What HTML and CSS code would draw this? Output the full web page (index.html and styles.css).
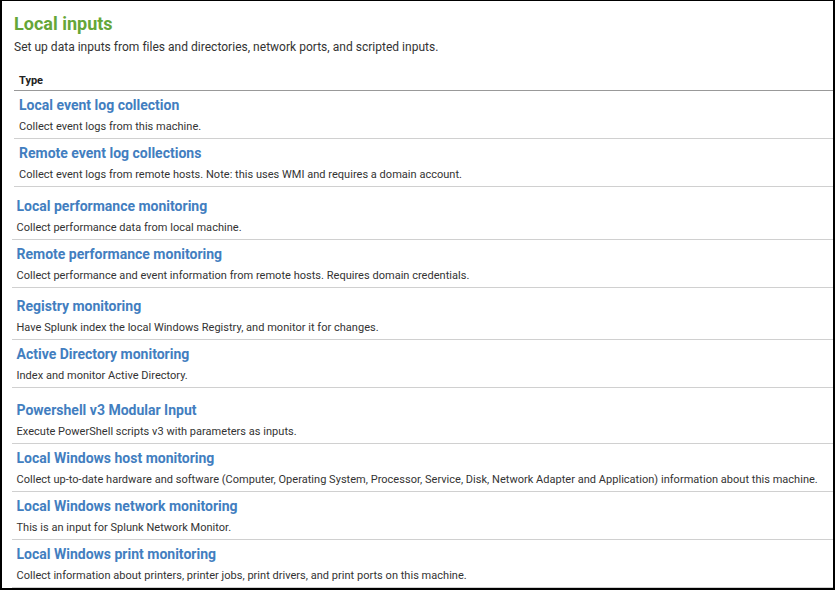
FILE: index.html
```html
<!DOCTYPE html>
<html lang="en">
<head>
    <meta charset="UTF-8">
    <title>Local inputs</title>
    <link rel="stylesheet" href="styles.css">
</head>
<body>
    <div class="frame">
        <div class="page-head">
            <h1>Local inputs</h1>
            <p class="subtitle">Set up data inputs from files and directories, network ports, and scripted inputs.</p>
        </div>

        <div class="inputs">
            <div class="inputs-head">Type</div>

            <div class="input-row">
                <a class="input-name">Local event log collection</a>
                <p class="input-desc">Collect event logs from this machine.</p>
            </div>
            <div class="input-row">
                <a class="input-name">Remote event log collections</a>
                <p class="input-desc">Collect event logs from remote hosts. Note: this uses WMI and requires a domain account.</p>
            </div>
            <div class="input-row shifted extra-5">
                <a class="input-name">Local performance monitoring</a>
                <p class="input-desc">Collect performance data from local machine.</p>
            </div>
            <div class="input-row shifted">
                <a class="input-name">Remote performance monitoring</a>
                <p class="input-desc">Collect performance and event information from remote hosts. Requires domain credentials.</p>
            </div>
            <div class="input-row shifted extra-4">
                <a class="input-name">Registry monitoring</a>
                <p class="input-desc">Have Splunk index the local Windows Registry, and monitor it for changes.</p>
            </div>
            <div class="input-row shifted">
                <a class="input-name">Active Directory monitoring</a>
                <p class="input-desc">Index and monitor Active Directory.</p>
            </div>
            <div class="input-row shifted extra-8">
                <a class="input-name">Powershell v3 Modular Input</a>
                <p class="input-desc">Execute PowerShell scripts v3 with parameters as inputs.</p>
            </div>
            <div class="input-row shifted">
                <a class="input-name">Local Windows host monitoring</a>
                <p class="input-desc">Collect up-to-date hardware and software (Computer, Operating System, Processor, Service, Disk, Network Adapter and Application) information about this machine.</p>
            </div>
            <div class="input-row shifted">
                <a class="input-name">Local Windows network monitoring</a>
                <p class="input-desc">This is an input for Splunk Network Monitor.</p>
            </div>
            <div class="input-row shifted">
                <a class="input-name">Local Windows print monitoring</a>
                <p class="input-desc">Collect information about printers, printer jobs, print drivers, and print ports on this machine.</p>
            </div>
        </div>
    </div>
</body>
</html>
```

FILE: styles.css
```css
* {
    margin: 0;
    padding: 0;
    box-sizing: border-box;
}

body {
    background: white;
    font-family: Roboto, "Liberation Sans", Arial, sans-serif;
    color: #333;
}

.frame {
    width: 835px;
    height: 590px;
    overflow: hidden;
    border-top: 1px solid #000;
    border-left: 2px solid #000;
    border-right: 2px solid #000;
    border-bottom: 2px solid #000;
    padding-top: 12px;
}

.page-head {
    padding-left: 12px;
    margin-bottom: 19px;
}

h1 {
    color: #65a637;
    font-size: 18px;
    line-height: 22px;
    font-weight: 700;
    margin-bottom: 4px;
}

.subtitle {
    font-size: 12px;
    line-height: 16px;
    letter-spacing: 0.02px;
}

.inputs-head {
    margin-left: 12px;
    padding: 0 0 2px 5px;
    font-size: 11px;
    line-height: 14px;
    font-weight: 700;
    color: #222;
    border-bottom: 1px solid #999;
}

.input-row {
    margin-left: 12px;
    padding: 5px 0 4px 5px;
    border-bottom: 1px solid #d0d0d0;
}

.input-row.shifted {
    margin-left: 10px;
    padding-left: 4.5px;
}

.input-row.extra-4 {
    padding-top: 9px;
}

.input-row.extra-5 {
    padding-top: 10px;
}

.input-row.extra-8 {
    padding-top: 13px;
}

.input-name {
    display: block;
    color: #427ec0;
    font-size: 14px;
    line-height: 18px;
    font-weight: 700;
    margin-bottom: 6px;
    cursor: pointer;
}

.input-desc {
    font-size: 11px;
    line-height: 14px;
    letter-spacing: 0.025px;
    color: #333;
    white-space: nowrap;
}
```
